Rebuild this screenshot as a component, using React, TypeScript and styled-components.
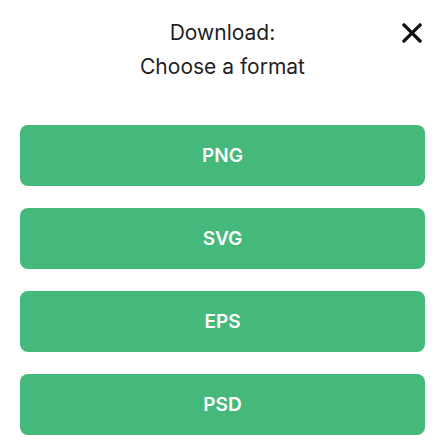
import React from 'react'
import styled, { createGlobalStyle } from 'styled-components'

const GlobalStyle = createGlobalStyle`
  body {
    margin: 0;
    background: #ffffff;
    font-family: Inter, "Noto Sans", sans-serif;
  }
`

const Dialog = styled.div`
  position: relative;
  padding: 16px 16px 0 20px;
`

const Title = styled.h2`
  margin: 0 0 41px;
  font-size: 21px;
  font-weight: 400;
  line-height: 34px;
  color: #1f1f1f;
  text-align: center;
`

const CloseButton = styled.button`
  position: absolute;
  top: 22px;
  right: 18px;
  width: 22px;
  height: 22px;
  padding: 0;
  border: none;
  background: none;
  display: flex;
  align-items: center;
  justify-content: center;
  cursor: pointer;
`

const Formats = styled.div`
  display: flex;
  flex-direction: column;
  gap: 22px;
`

const FormatButton = styled.button`
  height: 61px;
  border: none;
  border-radius: 8px;
  background: #45b87b;
  color: #ffffff;
  font-family: Inter, "Noto Sans", sans-serif;
  font-size: 19px;
  font-weight: 600;
  cursor: pointer;
`

const formats = ['PNG', 'SVG', 'EPS', 'PSD']

const App = () => {
  return (
    <>
      <GlobalStyle />
      <Dialog>
        <Title>
          Download:
          <br />
          Choose a format
        </Title>
        <CloseButton aria-label="Close">
          <svg width="20" height="20" viewBox="0 0 20 20">
            <path d="M2 2 L18 18 M18 2 L2 18" stroke="#111" strokeWidth="3.2" strokeLinecap="square" />
          </svg>
        </CloseButton>
        <Formats>
          {formats.map(f => (
            <FormatButton key={f}>{f}</FormatButton>
          ))}
        </Formats>
      </Dialog>
    </>
  )
}

export default App
